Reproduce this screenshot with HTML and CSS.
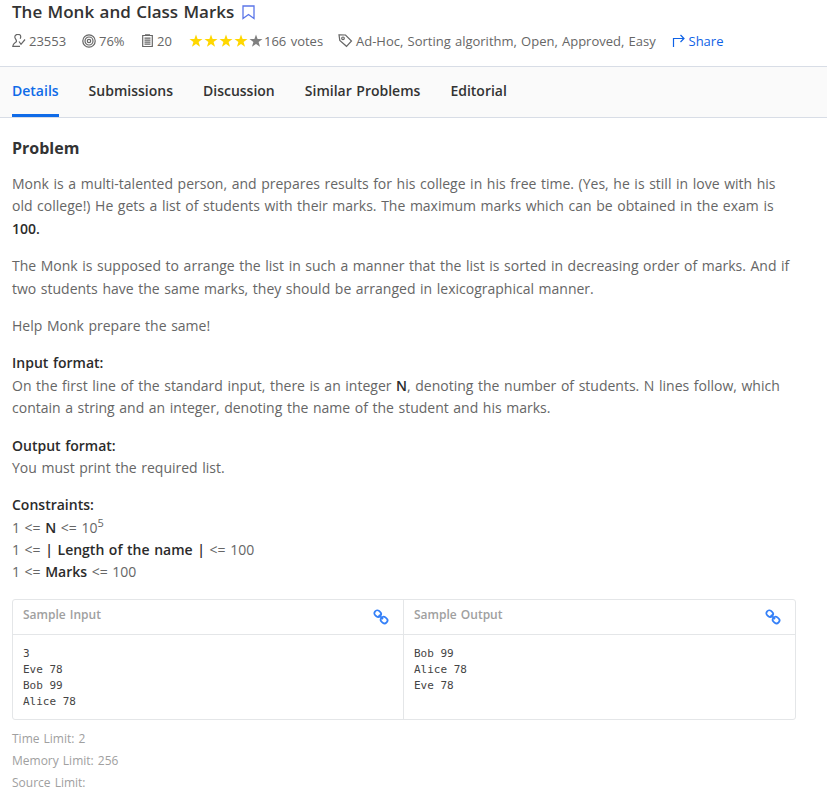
FILE: index.html
```html
<!DOCTYPE html>
<html lang="en">
<head>
<meta charset="utf-8">
<title>The Monk and Class Marks</title>
<link rel="stylesheet" href="styles.css">
</head>
<body>
<header class="header">
  <h1 class="title"><span class="title-text">The Monk and Class Marks</span>
    <svg class="bookmark" width="13" height="15" viewBox="0 0 13 15"><path d="M1 1h11v12.500L6.500 9.500 1 13.500z"/></svg>
  </h1>
  <div class="meta">
    <span class="stat solved"><svg class="icon" width="14" height="14" viewBox="0 0 14 14"><path d="M7.800.8C5.500-.2 2.800.6 2.800 3c0 1.700 1.700 2.500 1.700 4.200C4.500 8.700 1 8.500.8 12.300H8M7.800.8c1.100.8 1 2.600.4 4M7 7.500l2 2.800L13 5.500"/></svg><span>23553</span></span>
    <span class="stat accuracy"><svg class="icon" width="14" height="14" viewBox="0 0 14 14"><circle cx="7" cy="7" r="6.200"/><circle cx="7" cy="7" r="4"/><circle cx="7" cy="7" r="1.700"/></svg><span>76%</span></span>
    <span class="stat points"><svg class="icon" width="13" height="14" viewBox="0 0 13 14"><path d="M1.700 1.500h9.600v11H1.700zM3.500 4.200h6M3.500 6.200h6M3.500 8.200h6M3.500 10.200h6M4 .8h5"/></svg><span>20</span></span>
    <span class="stat votes">
      <svg class="stars" width="74" height="14" viewBox="0 0 74 14">
        <defs><path id="star" d="M7 .5 8.600 5.100h4.900L9.600 8l1.450 4.700L7 9.900 2.950 12.700 4.400 8 .5 5.100h4.900z"/></defs>
        <use href="#star" class="on"/><use href="#star" class="on" x="15"/><use href="#star" class="on" x="30"/><use href="#star" class="on" x="45"/><use href="#star" class="off" x="60"/>
      </svg><span>166 votes</span></span>
    <span class="stat tags"><svg class="icon" width="15" height="14" viewBox="0 0 15 14"><path d="M1 .9 7.500 1 13.500 7 8.500 12.300 1.800 6.500z"/><circle cx="5" cy="4.300" r="1.300"/></svg><span>Ad-Hoc, Sorting algorithm, Open, Approved, Easy</span></span>
    <a class="stat share"><svg class="icon" width="13" height="14" viewBox="0 0 13 14"><path d="M1.500 13V4.500H12M8.500 1 12 4.500 8.500 8"/></svg><span>Share</span></a>
  </div>
</header>
<nav class="tabs">
  <a class="tab active">Details</a><a class="tab">Submissions</a><a class="tab">Discussion</a><a class="tab">Similar Problems</a><a class="tab">Editorial</a>
</nav>
<main class="content">
  <h2 class="heading">Problem</h2>
  <p>Monk is a multi-talented person, and prepares results for his college in his free time. (Yes, he is still in love with his<br>old college!) He gets a list of students with their marks. The maximum marks which can be obtained in the exam is<br><b>100.</b></p>
  <p>The Monk is supposed to arrange the list in such a manner that the list is sorted in decreasing order of marks. And if<br>two students have the same marks, they should be arranged in lexicographical manner.</p>
  <p>Help Monk prepare the same!</p>
  <p><b>Input format:</b><br>On the first line of the standard input, there is an integer <b>N</b>, denoting the number of students. N lines follow, which<br>contain a string and an integer, denoting the name of the student and his marks.</p>
  <p><b>Output format:</b><br>You must print the required list.</p>
  <p class="constraints"><b>Constraints:</b><br>1 &lt;= <b>N</b> &lt;= 10<sup>5</sup><br>1 &lt;= <b>| Length of the name |</b> &lt;= 100<br>1 &lt;= <b>Marks</b> &lt;= 100</p>
  <section class="samples">
    <div class="sample">
      <div class="sample-head"><span>Sample Input</span><svg class="link" width="16" height="16" viewBox="0 0 16 16"><rect x="1.300" y="1.700" width="6.800" height="5.800" rx="2.700" transform="rotate(40 4.700 4.600)"/><rect x="7.700" y="8.200" width="6.800" height="5.800" rx="2.700" transform="rotate(40 11.100 11.100)"/><path d="M5.800 5.800l4.200 4.200"/></svg></div>
      <pre>3
Eve 78
Bob 99
Alice 78</pre>
    </div>
    <div class="sample">
      <div class="sample-head"><span>Sample Output</span><svg class="link" width="16" height="16" viewBox="0 0 16 16"><rect x="1.300" y="1.700" width="6.800" height="5.800" rx="2.700" transform="rotate(40 4.700 4.600)"/><rect x="7.700" y="8.200" width="6.800" height="5.800" rx="2.700" transform="rotate(40 11.100 11.100)"/><path d="M5.800 5.800l4.200 4.200"/></svg></div>
      <pre>Bob 99
Alice 78
Eve 78</pre>
    </div>
  </section>
  <div class="limits"><div>Time Limit: 2</div><div>Memory Limit: 256</div><div>Source Limit:</div></div>
</main>
</body>
</html>
```
FILE: styles.css
```css
* { box-sizing: border-box; }
body {
  margin: 0;
  background: #fff;
  color: #666;
  font: 14px/22.4px "Open Sans", sans-serif;
  word-spacing: 0.96px;
  overflow: hidden;
}
svg { display: block; flex: none; fill: none; }
.header { height: 66px; padding-left: 12px; }
.title {
  display: flex;
  align-items: center;
  gap: 8px;
  height: 24px;
  margin: 0;
  color: #333;
  font-size: 17px;
  font-weight: 600;
  line-height: 24px;
}
.bookmark { stroke: #5b76e8; stroke-width: 1.3; }
.meta {
  display: flex;
  align-items: center;
  height: 34px;
  font-size: 13px;
  white-space: nowrap;
}
.stat { display: flex; align-items: center; gap: 3px; }
.icon { stroke: currentColor; stroke-width: 1.2; }
.solved { width: 70px; }
.accuracy { width: 59px; }
.points { width: 48px; }
.votes { width: 149px; gap: 1px; }
.tags { width: 334px; word-spacing: 0.8px; }
.on { fill: #ffd700; }
.off { fill: #808080; }
.share { color: #0f62e6; gap: 3.5px; }
.tabs {
  display: flex;
  gap: 30px;
  height: 52px;
  padding-left: 12px;
  background: #fafafa;
  border-top: 1px solid #d8dde6;
  border-bottom: 1px solid #d8dde6;
}
.tab {
  height: 50px;
  color: #333;
  font-weight: 600;
  line-height: 48px;
  white-space: nowrap;
}
.active { color: #0f6be8; border-bottom: 3px solid #0f6be8; }
.content { padding: 18px 0 0 12px; }
.heading {
  height: 37px;
  margin: 0;
  color: #333;
  font-size: 16px;
  font-weight: 700;
  line-height: 24px;
}
p { margin: 0 0 15px; white-space: nowrap; }
b { color: #2b2b2b; font-weight: 600; }
sup { font-size: 11px; line-height: 0; }
.constraints { height: 89.600px; line-height: 22.300px; }
.samples {
  display: flex;
  width: 784px;
  height: 121px;
  border: 1px solid #e4e6e8;
  border-radius: 3px;
}
.sample { width: 390px; }
.sample + .sample { width: 392px; border-left: 1px solid #e4e6e8; }
.sample-head {
  display: flex;
  justify-content: space-between;
  height: 35px;
  padding: 5px 14px 0 10px;
  border-bottom: 1px solid #e4e6e8;
  color: #a0a0a0;
  font-size: 12px;
  font-weight: 600;
  line-height: 20px;
}
.link { margin-top: 4px; stroke: #3580f8; stroke-width: 1.8; }
pre {
  margin: 0;
  padding: 11px 10px;
  color: #444;
  font: 11px/16px "DejaVu Sans Mono", monospace;
  word-spacing: 0;
}
.limits {
  padding-top: 8px;
  color: #a0a0a0;
  font-size: 12px;
  line-height: 22px;
}
```
